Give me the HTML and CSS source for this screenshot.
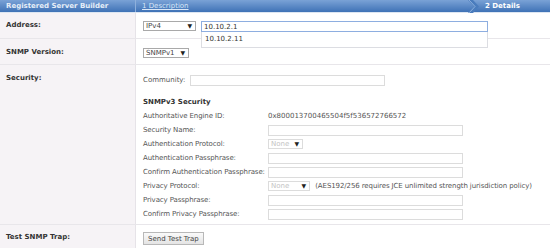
FILE: index.html
```html
<!DOCTYPE html>
<html>

<head>
    <meta charset="utf-8">
    <title>Registered Server Builder</title>
    <link rel="stylesheet" href="styles.css">
</head>

<body>

    <div class="wizard-head">
        <div class="head-title">Registered Server Builder</div>
        <div class="head-step"><a href="#">1 Description</a></div>
        <div class="head-current">
            <svg class="chevron" width="12" height="13" viewBox="0 0 12 13">
                <path d="M0 0 L5 0 L11 6.5 L5 13 L0 13 L6 6.5 Z" fill="#4a7cbd" />
                <path d="M1 0 L7 6.5 L1 13" fill="none" stroke="#8fb2de" stroke-width="1" />
            </svg>
            <span>2 Details</span>
        </div>
    </div>

    <div class="form">
        <div class="row row-address">
            <div class="label">Address:</div>
            <div class="field">
                <span class="select w-ipv4">IPv4<i>&#9660;</i></span>
                <span class="suggest">
                    <input class="text focus" type="text" value="10.10.2.1">
                    <span class="suggest-list">10.10.2.11</span>
                </span>
            </div>
        </div>

        <div class="row row-version">
            <div class="label">SNMP Version:</div>
            <div class="field">
                <span class="select w-version">SNMPv1<i>&#9660;</i></span>
            </div>
        </div>

        <div class="row row-security">
            <div class="label">Security:</div>
            <div class="field">
                <div class="community">
                    Community: <input class="text w-community" type="text">
                </div>
                <div class="v3-title">SNMPv3 Security</div>
                <div class="v3-grid">
                    <span>Authoritative Engine ID:</span>
                    <span class="engine">0x800013700465504f5f536572766572</span>

                    <span>Security Name:</span>
                    <input class="text w-long" type="text">

                    <span>Authentication Protocol:</span>
                    <span><span class="select off w-none">None<i>&#9660;</i></span></span>

                    <span>Authentication Passphrase:</span>
                    <input class="text w-long" type="text">

                    <span>Confirm Authentication Passphrase:</span>
                    <input class="text w-long" type="text">

                    <span>Privacy Protocol:</span>
                    <span>
                        <span class="select off w-none2">None<i>&#9660;</i></span>
                        <span class="note">(AES192/256 requires JCE unlimited strength jurisdiction policy)</span>
                    </span>

                    <span>Privacy Passphrase:</span>
                    <input class="text w-long" type="text">

                    <span>Confirm Privacy Passphrase:</span>
                    <input class="text w-long" type="text">
                </div>
            </div>
        </div>

        <div class="row row-trap">
            <div class="label">Test SNMP Trap:</div>
            <div class="field">
                <button>Send Test Trap</button>
            </div>
        </div>
    </div>

</body>

</html>
```

FILE: styles.css
```css
body {
    margin: 0;
    font-family: "DejaVu Sans", Verdana, sans-serif;
    font-size: 7px;
    color: #555;
    background-color: #fff;
}

.wizard-head {
    display: flex;
    height: 12px;
    line-height: 12px;
    background: linear-gradient(#7aa2d6, #3f72b6);
    border-bottom: 1px solid #dde6f2;
    color: #fff;
}

.head-title {
    width: 129px;
    padding-left: 6px;
    font-weight: bold;
    color: #e6eef8;
    border-right: 1px solid #8eb0dc;
}

.head-step {
    flex: 1;
    padding-left: 6px;
}

.head-step a {
    color: #d8e6f7;
    text-decoration: underline;
}

.head-current {
    display: flex;
    align-items: center;
    width: 82px;
    font-weight: bold;
}

.chevron {
    margin-right: 5px;
}

.row {
    display: flex;
    border-bottom: 1px solid #e8e6ea;
}

.label {
    width: 129px;
    padding-left: 6px;
    background-color: #f6f3f6;
    border-right: 1px solid #e6e3e8;
    font-weight: bold;
    color: #333;
}

.field {
    flex: 1;
    padding-left: 7px;
}

.row-address {
    height: 25px;
}

.row-address .label {
    padding-top: 8px;
}

.row-address .field {
    display: flex;
    align-items: flex-start;
    padding-top: 8px;
}

.row-version {
    height: 25px;
}

.row-version .label {
    padding-top: 9px;
}

.row-version .field {
    padding-top: 9px;
}

.row-security {
    height: 159px;
}

.row-security .label {
    padding-top: 9px;
}

.row-security .field {
    padding-top: 10px;
}

.row-trap {
    height: 30px;
    border-bottom: none;
}

.row-trap .label {
    padding-top: 8px;
}

.row-trap .field {
    padding-top: 7px;
}

.select {
    display: inline-flex;
    justify-content: space-between;
    align-items: center;
    box-sizing: border-box;
    height: 10px;
    padding: 0 3px 0 2px;
    border: 1px solid #a9a9a9;
    background-color: #fff;
    color: #444;
    line-height: 8px;
    vertical-align: middle;
}

.select i {
    font-style: normal;
    font-size: 6px;
    color: #222;
}

.select.off {
    border-color: #dcdcdc;
    color: #c4c4c4;
}

.w-ipv4 {
    width: 53px;
}

.w-version {
    width: 46px;
}

.w-none {
    width: 35px;
}

.w-none2 {
    width: 42px;
}

.suggest {
    position: relative;
    margin-left: 5px;
}

.text {
    box-sizing: border-box;
    height: 11px;
    margin: 0;
    padding: 0 2px;
    border: 1px solid #dcdcdc;
    font-family: inherit;
    font-size: 7px;
    color: #333;
    vertical-align: middle;
}

.focus {
    width: 287px;
    border-color: #8eaee0;
    outline: none;
}

.suggest-list {
    position: absolute;
    left: 0;
    top: 11px;
    box-sizing: border-box;
    width: 287px;
    height: 16px;
    padding: 3px 3px;
    border: 1px solid #dcdde2;
    border-top: none;
    background-color: #fff;
    color: #333;
}

.w-community {
    width: 195px;
    margin-left: 2px;
}

.w-long {
    width: 195px;
}

.v3-title {
    margin-top: 12px;
    font-weight: bold;
    color: #333;
}

.v3-grid {
    display: grid;
    grid-template-columns: 125px auto;
    grid-auto-rows: 14px;
    align-items: center;
    justify-content: start;
    margin-top: 3px;
    white-space: nowrap;
}

.v3-grid > span:nth-child(odd) {
    letter-spacing: -0.1px;
}

.note {
    margin-left: 3px;
    letter-spacing: -0.1px;
    color: #555;
}

button {
    height: 13px;
    padding: 0 4px;
    border: 1px solid #b8b8b8;
    background: linear-gradient(#fafafa, #e4e4e4);
    font-family: inherit;
    font-size: 7px;
    color: #444;
}
```
